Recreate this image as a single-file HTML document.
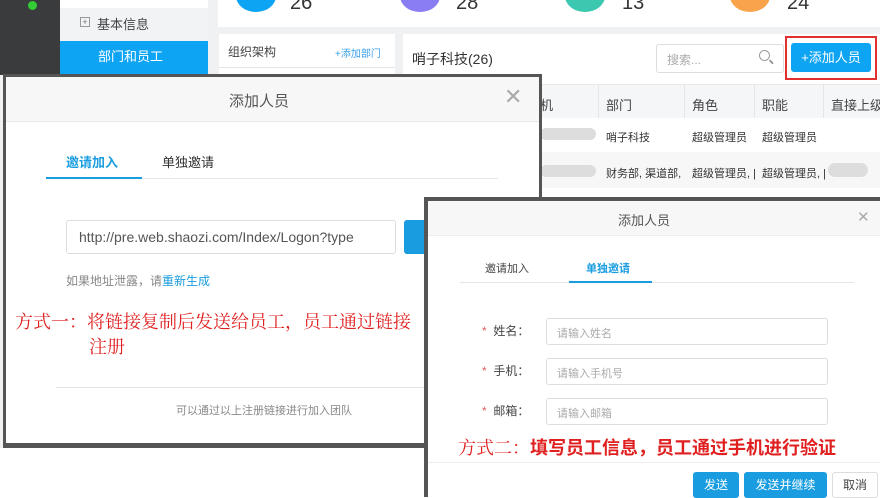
<!DOCTYPE html>
<html><head><meta charset="utf-8"><style>
*{box-sizing:border-box;margin:0;padding:0}
body{width:880px;height:493px;overflow:hidden;position:relative;background:#fff;font-family:"Liberation Sans","Noto Sans CJK SC",sans-serif;font-size:12px;color:#333}
.a{position:absolute}
</style></head><body>
<div class="a" style="left:0;top:0;width:880px;height:493px;background:#f0f1f3"></div>
<div class="a" style="left:0;top:0;width:60px;height:75px;background:#3a3b3d"></div>
<div class="a" style="left:28px;top:1px;width:9px;height:9px;border-radius:50%;background:#3c3"></div>
<div class="a" style="left:60px;top:0;width:148px;height:75px;background:#f2f3f5"></div>
<div class="a" style="left:60px;top:0;width:148px;height:8px;background:#fff"></div>
<div class="a" style="left:80px;top:17px;width:10px;height:10px;border:1px solid #999;font-size:9px;line-height:8px;text-align:center;color:#777">+</div>
<div class="a" style="left:97px;top:14px;font-size:13px;color:#444">基本信息</div>
<div class="a" style="left:60px;top:41px;width:148px;height:34px;background:#0ea4f4;color:#fff;font-size:13px;line-height:32px;padding-left:38px">部门和员工</div>
<div class="a" style="left:218px;top:0;width:662px;height:27px;background:#fff"></div>
<div class="a" style="left:236px;top:-20px;width:40px;height:32px;border-radius:50%;background:#0ea4f4"></div>
<div class="a" style="left:290px;top:-8px;font-size:20px;color:#333">26</div>
<div class="a" style="left:400px;top:-20px;width:40px;height:32px;border-radius:50%;background:#8a7cf2"></div>
<div class="a" style="left:456px;top:-8px;font-size:20px;color:#333">28</div>
<div class="a" style="left:565px;top:-20px;width:40px;height:32px;border-radius:50%;background:#3cc8b0"></div>
<div class="a" style="left:622px;top:-8px;font-size:20px;color:#333">13</div>
<div class="a" style="left:730px;top:-20px;width:40px;height:32px;border-radius:50%;background:#f9a34a"></div>
<div class="a" style="left:787px;top:-8px;font-size:20px;color:#333">24</div>
<div class="a" style="left:219px;top:34px;width:176px;height:460px;background:#fff"></div>
<div class="a" style="left:228px;top:43px;font-size:12px;color:#444">组织架构</div>
<div class="a" style="left:335px;top:45px;font-size:10px;color:#3aa0e8">+添加部门</div>
<div class="a" style="left:219px;top:67px;width:176px;height:1px;background:#e6e6e6"></div>
<div class="a" style="left:403px;top:34px;width:477px;height:460px;background:#fff"></div>
<div class="a" style="left:412px;top:49px;font-size:14px;color:#333">哨子科技(26)</div>
<div class="a" style="left:656px;top:44px;width:128px;height:29px;border:1px solid #ddd;border-radius:3px;color:#aaa;padding:6px 10px;font-size:12px">搜索...</div>
<div class="a" style="left:759px;top:50px;width:11px;height:11px;border:1.5px solid #999;border-radius:50%"></div>
<div class="a" style="left:769px;top:61px;width:5px;height:1.5px;background:#999;transform:rotate(45deg)"></div>
<div class="a" style="left:785px;top:36px;width:92px;height:44px;border:2px solid #e03030"></div>
<div class="a" style="left:791px;top:43px;width:80px;height:29px;background:#0ea4f4;border-radius:3px;color:#fff;font-size:13px;line-height:29px;text-align:center">+添加人员</div>
<div class="a" style="left:540px;top:84px;width:340px;height:34px;background:#f5f6f8;border-top:1px solid #e8e8e8"></div>
<div class="a" style="left:540px;top:95px;font-size:13px;color:#444">机</div>
<div class="a" style="left:606px;top:95px;font-size:13px;color:#444">部门</div>
<div class="a" style="left:692px;top:95px;font-size:13px;color:#444">角色</div>
<div class="a" style="left:762px;top:95px;font-size:13px;color:#444">职能</div>
<div class="a" style="left:831px;top:95px;font-size:13px;color:#444;white-space:nowrap">直接上级</div>
<div class="a" style="left:598px;top:84px;width:1px;height:34px;background:#e5e5e5"></div>
<div class="a" style="left:684px;top:84px;width:1px;height:34px;background:#e5e5e5"></div>
<div class="a" style="left:754px;top:84px;width:1px;height:34px;background:#e5e5e5"></div>
<div class="a" style="left:823px;top:84px;width:1px;height:34px;background:#e5e5e5"></div>
<div class="a" style="left:540px;top:128px;width:56px;height:12px;border-radius:6px;background:#ddd"></div>
<div class="a" style="left:606px;top:129px;font-size:11px">哨子科技</div>
<div class="a" style="left:692px;top:129px;font-size:11px">超级管理员</div>
<div class="a" style="left:762px;top:129px;font-size:11px">超级管理员</div>
<div class="a" style="left:540px;top:152px;width:340px;height:36px;background:#f7f7f7"></div>
<div class="a" style="left:540px;top:165px;width:56px;height:12px;border-radius:6px;background:#ddd"></div>
<div class="a" style="left:606px;top:165px;font-size:11px;white-space:nowrap">财务部, 渠道部,</div>
<div class="a" style="left:692px;top:165px;font-size:11px;white-space:nowrap">超级管理员, |</div>
<div class="a" style="left:762px;top:165px;font-size:11px;white-space:nowrap">超级管理员, |</div>
<div class="a" style="left:828px;top:163px;width:40px;height:14px;border-radius:7px;background:#ddd"></div>
<div class="a" style="left:0;top:448px;width:425px;height:45px;background:#fff"></div>

<!-- dialog 1 -->
<div class="a" style="left:3px;top:74px;width:539px;height:374px;background:#555"></div>
<div class="a" style="left:6px;top:77px;width:533px;height:366px;background:#fff"></div>
<div class="a" style="left:6px;top:77px;width:533px;height:45px;background:#f7f7f7;border-bottom:1px solid #e8e8e8"></div>
<div class="a" style="left:229px;top:90px;font-size:15px;color:#555">添加人员</div>
<div class="a" style="left:504px;top:87px;font-size:22px;color:#aaa;line-height:20px">✕</div>
<div class="a" style="left:46px;top:178px;width:452px;height:1px;background:#e5e5e5"></div>
<div class="a" style="left:46px;top:177px;width:96px;height:2px;background:#1a9de0"></div>
<div class="a" style="left:66px;top:152px;font-size:13px;color:#1a9de0;font-weight:bold">邀请加入</div>
<div class="a" style="left:162px;top:152px;font-size:13px;color:#333">单独邀请</div>
<div class="a" style="left:66px;top:220px;width:330px;height:34px;border:1px solid #ddd;border-radius:3px;font-size:14px;color:#555;padding:8px 12px;white-space:nowrap;overflow:hidden">http://pre.web.shaozi.com/Index/Logon?type</div>
<div class="a" style="left:404px;top:220px;width:20px;height:34px;background:#1a9de0;border-radius:3px 0 0 3px"></div>
<div class="a" style="left:66px;top:272px;font-size:12px;color:#888">如果地址泄露，请<span style="color:#1a9de0">重新生成</span></div>
<div class="a" style="left:15px;top:310px;font-size:18px;color:#e02020;font-family:'Liberation Serif','Noto Serif CJK SC',serif;line-height:25px;width:420px;white-space:nowrap">方式一：将链接复制后发送给员工，员工通过链接<br><span style="padding-left:74px">注册</span></div>
<div class="a" style="left:56px;top:387px;width:368px;height:1px;background:#e5e5e5"></div>
<div class="a" style="left:176px;top:402px;font-size:11px;color:#888">可以通过以上注册链接进行加入团队</div>

<!-- dialog 2 -->
<div class="a" style="left:424px;top:197px;width:460px;height:300px;background:#555"></div>
<div class="a" style="left:428px;top:201px;width:452px;height:296px;background:#fff"></div>
<div class="a" style="left:428px;top:201px;width:452px;height:35px;background:#f7f7f7;border-bottom:1px solid #eee"></div>
<div class="a" style="left:618px;top:210px;font-size:13px;color:#555">添加人员</div>
<div class="a" style="left:857px;top:208px;font-size:15px;color:#aaa">✕</div>
<div class="a" style="left:460px;top:282px;width:394px;height:1px;background:#e5e5e5"></div>
<div class="a" style="left:569px;top:281px;width:83px;height:2px;background:#1a9de0"></div>
<div class="a" style="left:485px;top:260px;font-size:11px;color:#444">邀请加入</div>
<div class="a" style="left:586px;top:260px;font-size:11px;color:#1a9de0;font-weight:bold">单独邀请</div>
<div class="a" style="left:482px;top:322px;font-size:12px;color:#444"><span style="color:#e06060">*</span>&nbsp; 姓名：</div>
<div class="a" style="left:482px;top:362px;font-size:12px;color:#444"><span style="color:#e06060">*</span>&nbsp; 手机：</div>
<div class="a" style="left:482px;top:402px;font-size:12px;color:#444"><span style="color:#e06060">*</span>&nbsp; 邮箱：</div>
<div class="a" style="left:546px;top:318px;width:282px;height:27px;border:1px solid #ddd;border-radius:3px;font-size:11px;color:#aaa;padding:6px 10px">请输入姓名</div>
<div class="a" style="left:546px;top:358px;width:282px;height:27px;border:1px solid #ddd;border-radius:3px;font-size:11px;color:#aaa;padding:6px 10px">请输入手机号</div>
<div class="a" style="left:546px;top:398px;width:282px;height:27px;border:1px solid #ddd;border-radius:3px;font-size:11px;color:#aaa;padding:6px 10px">请输入邮箱</div>
<div class="a" style="left:458px;top:434px;font-size:18px;color:#e02020;font-weight:bold;white-space:nowrap"><span style="font-weight:normal;font-family:'Liberation Serif','Noto Serif CJK SC',serif">方式二：</span>填写员工信息，员工通过手机进行验证</div>
<div class="a" style="left:428px;top:462px;width:452px;height:1px;background:#eee"></div>
<div class="a" style="left:693px;top:472px;width:46px;height:26px;background:#1a9de0;border-radius:3px;color:#fff;font-size:12px;text-align:center;line-height:26px">发送</div>
<div class="a" style="left:744px;top:472px;width:83px;height:26px;background:#1a9de0;border-radius:3px;color:#fff;font-size:12px;text-align:center;line-height:26px">发送并继续</div>
<div class="a" style="left:832px;top:472px;width:46px;height:26px;border:1px solid #ddd;border-radius:3px;color:#444;font-size:12px;text-align:center;line-height:24px">取消</div>
</body></html>
